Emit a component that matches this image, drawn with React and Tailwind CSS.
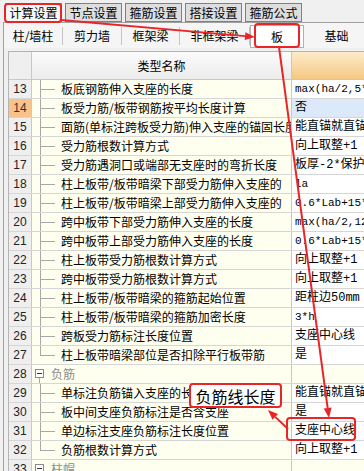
import React from 'react';

const rows = [
  { n: 13, name: '板底钢筋伸入支座的长度', val: 'max(ha/2,5*d)', small: true },
  { n: 14, name: '板受力筋/板带钢筋按平均长度计算', val: '否', sel: true },
  { n: 15, name: '面筋(单标注跨板受力筋)伸入支座的锚固长度', val: '能直锚就直锚,否则按公式计算' },
  { n: 16, name: '受力筋根数计算方式', val: '向上取整+1' },
  { n: 17, name: '受力筋遇洞口或端部无支座时的弯折长度', val: '板厚-2*保护层厚度' },
  { n: 18, name: '柱上板带/板带暗梁下部受力筋伸入支座的', val: 'la', small: true },
  { n: 19, name: '柱上板带/板带暗梁上部受力筋伸入支座的', val: '0.6*Lab+15*d', small: true },
  { n: 20, name: '跨中板带下部受力筋伸入支座的长度', val: 'max(ha/2,12*d)', small: true },
  { n: 21, name: '跨中板带上部受力筋伸入支座的长度', val: '0.6*Lab+15*d', small: true },
  { n: 22, name: '柱上板带受力筋根数计算方式', val: '向上取整+1' },
  { n: 23, name: '跨中板带受力筋根数计算方式', val: '向上取整+1' },
  { n: 24, name: '柱上板带/板带暗梁的箍筋起始位置', val: '距柱边50mm' },
  { n: 25, name: '柱上板带/板带暗梁的箍筋加密长度', val: '3*h', small: true },
  { n: 26, name: '跨板受力筋标注长度位置', val: '支座中心线' },
  { n: 27, name: '柱上板带暗梁部位是否扣除平行板带筋', val: '是', last: true },
  { n: 28, name: '负筋', group: true },
  { n: 29, name: '单标注负筋锚入支座的长度', val: '能直锚就直锚,否则按公式计算' },
  { n: 30, name: '板中间支座负筋标注是否含支座', val: '是' },
  { n: 31, name: '单边标注支座负筋标注长度位置', val: '支座中心线' },
  { n: 32, name: '负筋根数计算方式', val: '向上取整+1', last: true },
  { n: 33, name: '柱帽', group: true, noLine: true },
];

const topTabs = ['计算设置', '节点设置', '箍筋设置', '搭接设置', '箍筋公式'];
const subTabs = [
  { t: '柱/墙柱', w: 'w-[59px]' },
  { t: '剪力墙', w: 'w-[59px]' },
  { t: '框架梁', w: 'w-[58px]' },
  { t: '非框架梁', w: 'w-[70px]' },
  { t: '板', w: 'w-[54px]', on: true },
  { t: '基础', w: 'w-[66px]' },
];

function Tree({ r }) {
  if (r.group) {
    return (
      <div className="relative w-[19px] h-full shrink-0">
        <div className="absolute left-[3px] top-[4px] w-[9px] h-[9px] border border-[#8a8a8a] bg-white flex items-center justify-center">
          <div className="w-[5px] h-px bg-[#333]" />
        </div>
        {!r.noLine && <div className="absolute left-[7px] top-[13px] bottom-[-1px] w-px bg-[#a8a8a8]" />}
      </div>
    );
  }
  return (
    <div className="relative w-[29px] h-full shrink-0">
      <div className={`absolute left-[8px] top-[-1px] w-px bg-[#a8a8a8] ${r.last ? 'h-[10px]' : 'bottom-[-1px]'}`} />
      <div className="absolute left-[8px] top-[9px] w-[15px] h-px bg-[#a8a8a8]" />
    </div>
  );
}

function Arrow({ x1, y1, x2, y2 }) {
  const dx = x2 - x1, dy = y2 - y1;
  const len = Math.hypot(dx, dy);
  const ux = dx / len, uy = dy / len;
  const bx = x2 - ux * 10, by = y2 - uy * 10;
  const px = -uy * 4, py = ux * 4;
  return (
    <g>
      <line x1={x1} y1={y1} x2={bx} y2={by} stroke="#e8262a" strokeWidth="2" />
      <polygon points={`${x2},${y2} ${bx + px},${by + py} ${bx - px},${by - py}`} fill="#e8262a" />
    </g>
  );
}

export default function App() {
  return (
    <div className="relative w-[364px] h-[471px] overflow-hidden bg-[#f0f0f0] text-[12px] text-black" style={{ fontFamily: '"Noto Sans CJK SC", sans-serif' }}>
      {/* top tabs */}
      <div className="h-[22px] flex items-end gap-[3px] pl-[5px]">
        {topTabs.map((t, i) => (
          <div key={t} className={`w-[57px] h-[19px] border border-[#808080] text-center leading-[17px] ${i === 0 ? 'bg-[#f7f7f7] border-b-0' : 'bg-[#dedede]'}`}>{t}</div>
        ))}
      </div>

      <div className="ml-[3px] border-l border-t border-[#a0a0a0] h-[449px] bg-[#f0f0f0]">
        {/* sub tabs */}
        <div className="h-[25px] flex bg-[#f5f5f5]">
          {subTabs.map((s) => (
            <div key={s.t} className={`${s.w} shrink-0 flex items-center justify-center ${s.on ? 'bg-white border border-[#b0b0b0] mt-[2px] h-[23px]' : 'h-full'}`}>
              <div className={`w-full text-center leading-[18px] ${s.on ? '' : 'border-r border-[#c4c4c4]'}`}>{s.t}</div>
            </div>
          ))}
        </div>

        {/* grid */}
        <div className="pl-[4px] pt-[3px]">
          <div className="border-l border-t border-[#b4b4b4]">
            <div className="flex h-[28px] border-b border-[#c8c8c8]">
              <div className="w-[23px] shrink-0 border-r border-[#c8c8c8] bg-[#efefef]" />
              <div className="w-[260px] shrink-0 border-r border-[#c8c8c8] bg-gradient-to-b from-[#fbfbfb] to-[#ececec] flex items-center justify-center">类型名称</div>
              <div className="flex-1 bg-gradient-to-b from-[#fdebc8] to-[#f5c882]" />
            </div>
            {rows.map((r) => (
              <div key={r.n} className="flex h-[19px] border-b border-[#d6d6d6]">
                <div className={`w-[23px] shrink-0 border-r border-[#c8c8c8] text-center leading-[18px] ${r.sel ? 'bg-[#f8c38a] text-[#333]' : 'bg-[#efefef] text-[#222]'}`} style={{ fontFamily: '"Liberation Sans", sans-serif' }}>{r.n}</div>
                <div className="w-[260px] shrink-0 border-r border-[#c8c8c8] bg-[#fffff0] flex overflow-hidden whitespace-nowrap">
                  <Tree r={r} />
                  <span className={`leading-[18px] ${r.group ? 'text-[#8c8c8c]' : ''}`}>{r.name}</span>
                </div>
                <div className={`flex-1 pl-[3px] overflow-hidden whitespace-nowrap leading-[18px] ${r.sel ? 'bg-[#dbe9fb]' : r.group ? 'bg-[#fffff0]' : 'bg-white'} ${r.small ? 'text-[11px]' : ''}`} style={{ fontFamily: '"Liberation Mono", "Noto Sans CJK SC", monospace' }}>{r.val}</div>
              </div>
            ))}
          </div>
        </div>
      </div>

      {/* annotations */}
      <svg className="absolute inset-0 pointer-events-none" width="364" height="471">
        <rect x="5" y="4" width="56" height="18" rx="3" fill="none" stroke="#e8262a" strokeWidth="2" />
        <Arrow x1={61} y1={20} x2={255} y2={37} />
        <rect x="255" y="24" width="44" height="23" rx="3" fill="none" stroke="#e8262a" strokeWidth="2" />
        <Arrow x1={279} y1={47} x2={329} y2={418} />
        <rect x="287" y="418" width="68" height="22" rx="3" fill="none" stroke="#e8262a" strokeWidth="2" />
        <Arrow x1={288} y1={429} x2={268} y2={410} />
      </svg>
      <div className="absolute left-[189px] top-[383px] w-[93px] h-[25px] border-2 border-[#e8262a] rounded-[4px] bg-white flex items-center justify-center text-[16px] leading-none">负筋线长度</div>
    </div>
  );
}
